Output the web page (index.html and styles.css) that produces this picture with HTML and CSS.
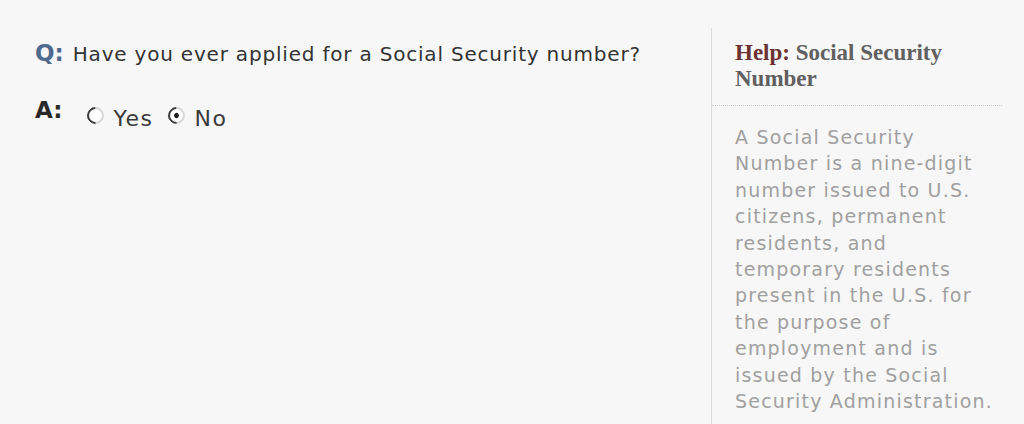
FILE: index.html
```html
<!DOCTYPE html>
<html lang="en">
<head>
<meta charset="utf-8">
<title>Social Security number</title>
<link rel="stylesheet" href="styles.css">
</head>
<body>
<div class="page">
  <div class="main">
    <div class="row q-row">
      <span class="label q-label">Q:</span>
      <span class="question">Have you ever applied for a Social Security number?</span>
    </div>
    <div class="row a-row">
      <span class="label a-label">A:</span>
      <label class="choice"><input type="radio" name="ssn" class="radio"><span>Yes</span></label>
      <label class="choice"><input type="radio" name="ssn" class="radio" checked><span>No</span></label>
    </div>
  </div>
  <div class="help">
    <h2 class="help-title"><span class="help-word">Help:</span> Social Security<br>Number</h2>
    <p class="help-text">A Social Security<br>Number is a nine-digit<br>number issued to U.S.<br>citizens, permanent<br>residents, and<br>temporary residents<br>present in the U.S. for<br>the purpose of<br>employment and is<br>issued by the Social<br>Security Administration.</p>
  </div>
</div>
</body>
</html>
```
FILE: styles.css
```css
html, body {
  margin: 0;
  padding: 0;
  background: #f7f7f7;
  height: 100%;
}
body {
  font-family: "DejaVu Sans", Verdana, sans-serif;
}
.page {
  display: flex;
  height: 424px;
  overflow: hidden;
}
.main {
  width: 676px;
  padding: 39px 0 0 35px;
}
.row {
  display: flex;
  align-items: baseline;
  line-height: 28px;
}
.label {
  font-weight: bold;
  font-size: 23px;
}
.q-label {
  color: #4f6a8c;
  margin-right: 9px;
}
.question {
  font-size: 20px;
  letter-spacing: 0.8px;
  color: #333;
}
.a-row {
  margin-top: 27px;
}
.a-label {
  color: #2a2a2a;
  margin-right: 25px;
}
.choice {
  display: flex;
  align-items: center;
  font-size: 22px;
  letter-spacing: 1.5px;
  color: #3a3a3a;
  margin-right: 15px;
  position: relative;
  top: 10px;
}
.radio {
  appearance: none;
  -webkit-appearance: none;
  margin: 0 9px 0 0;
  width: 17px;
  height: 17px;
  border-radius: 50%;
  border: 2px solid;
  border-color: #3e3e3e #d6d6d6 #d6d6d6 #3e3e3e;
  transform: rotate(-45deg);
  background: #fff;
  box-sizing: border-box;
  position: relative;
  top: -4px;
  flex: none;
}
.radio:checked::after {
  content: "";
  position: absolute;
  left: 4px;
  top: 4px;
  width: 5px;
  height: 5px;
  border-radius: 50%;
  background: #1e1e1e;
}
.help {
  flex: 1;
  margin-top: 28px;
  border-left: 1px solid #dcdcdc;
}
.help-title {
  margin: 0 22px 0 0;
  padding: 12px 0 13px 23px;
  font-family: "Liberation Serif", "Times New Roman", serif;
  font-weight: bold;
  font-size: 23px;
  line-height: 26px;
  color: #606060;
  border-bottom: 1px dotted #cfcfcf;
  white-space: nowrap;
}
.help-word {
  color: #6b3232;
}
.help-text {
  margin: 0;
  padding: 18px 0 0 23px;
  font-size: 19px;
  letter-spacing: 1.2px;
  line-height: 26.4px;
  color: #a0a0a0;
  white-space: nowrap;
}
```
